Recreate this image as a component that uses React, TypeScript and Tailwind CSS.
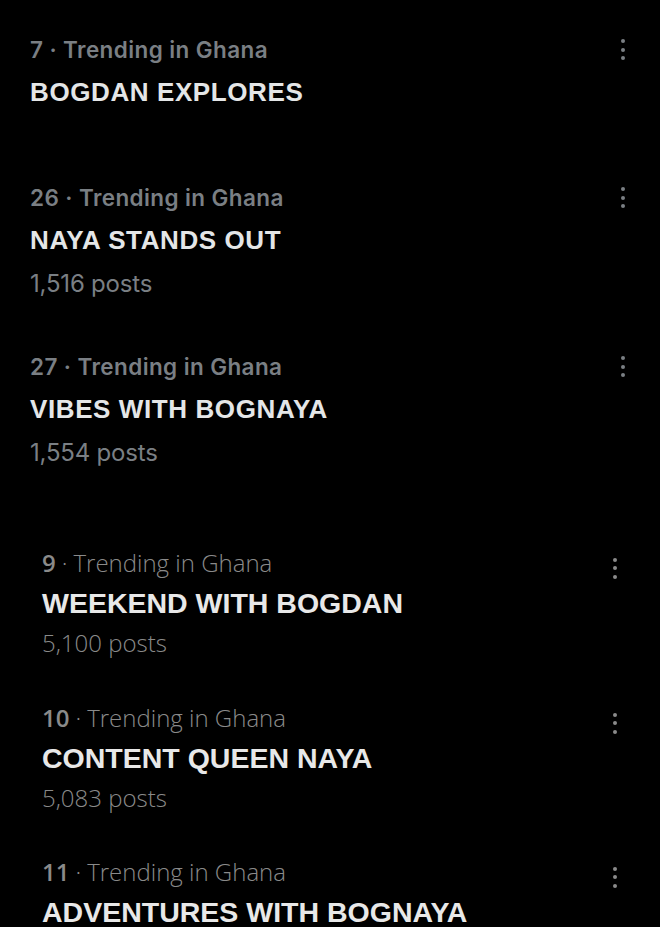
import React from "react";

function Dots({ big }: { big?: boolean }) {
  return (
    <div className="flex flex-col items-center gap-[4.5px]">
      <span className={"block rounded-full w-[4px] h-[4px] " + (big ? "bg-[#7a7f84]" : "bg-[#8a8a8a]")} />
      <span className={"block rounded-full w-[4px] h-[4px] " + (big ? "bg-[#7a7f84]" : "bg-[#8a8a8a]")} />
      <span className={"block rounded-full w-[4px] h-[4px] " + (big ? "bg-[#7a7f84]" : "bg-[#8a8a8a]")} />
    </div>
  );
}

function TopItem({ rank, title, posts }: { rank: string; title: string; posts?: string }) {
  return (
    <div className="flex pl-[30px] pr-[35px]" style={{ fontFamily: "Inter, 'Noto Sans', sans-serif" }}>
      <div className="flex-1 flex flex-col">
        <div className="h-[43px] flex items-center text-[22.5px] font-semibold text-[#7a7f84] tracking-[0.4px]">
          {rank} · Trending in Ghana
        </div>
        <div
          className="h-[43px] flex items-center text-[26px] font-bold text-[#e4e6e7] tracking-[0.6px]"
          style={{ fontFamily: "'Liberation Sans', Arial, sans-serif" }}
        >
          {title}
        </div>
        {posts && (
          <div className="h-[43px] flex items-center text-[24px] font-normal text-[#7a7f84] tracking-[-0.2px]">
            {posts}
          </div>
        )}
      </div>
      <div className="h-[43px] flex items-center">
        <Dots big />
      </div>
    </div>
  );
}

function BottomItem({ rank, title, posts }: { rank: string; title: string; posts?: string }) {
  return (
    <div className="flex pl-[42px] pr-[43px]">
      <div className="flex-1 flex flex-col">
        <div
          className="h-[40px] flex items-center text-[24px] font-light text-[#8a8a8a]"
          style={{ fontFamily: "'Open Sans', Roboto, sans-serif" }}
        >
          <span className="font-semibold">{rank}</span>
          <span className="mx-[6px]">·</span>
          <span>Trending in Ghana</span>
        </div>
        <div
          className="h-[40px] flex items-center text-[28.5px] font-bold text-[#e8e8e8]"
          style={{ fontFamily: "'Liberation Sans', Arial, sans-serif" }}
        >
          {title}
        </div>
        {posts && (
          <div
            className="h-[39px] flex items-center text-[24px] font-light text-[#8a8a8a]"
            style={{ fontFamily: "'Open Sans', Roboto, sans-serif" }}
          >
            {posts}
          </div>
        )}
      </div>
      <div className="h-[40px] pt-[10px] flex items-center">
        <Dots />
      </div>
    </div>
  );
}

export default function App() {
  return (
    <div className="w-[660px] h-[927px] bg-black overflow-hidden">
      <div className="pt-[28px] flex flex-col">
        <TopItem rank="7" title="BOGDAN EXPLORES" />
        <div className="h-[62px]" />
        <TopItem rank="26" title="NAYA STANDS OUT" posts="1,516 posts" />
        <div className="h-[40px]" />
        <TopItem rank="27" title="VIBES WITH BOGNAYA" posts="1,554 posts" />
        <div className="h-[69px]" />
        <BottomItem rank="9" title="WEEKEND WITH BOGDAN" posts="5,100 posts" />
        <div className="h-[36px]" />
        <BottomItem rank="10" title="CONTENT QUEEN NAYA" posts="5,083 posts" />
        <div className="h-[35px]" />
        <BottomItem rank="11" title="ADVENTURES WITH BOGNAYA" />
      </div>
    </div>
  );
}
